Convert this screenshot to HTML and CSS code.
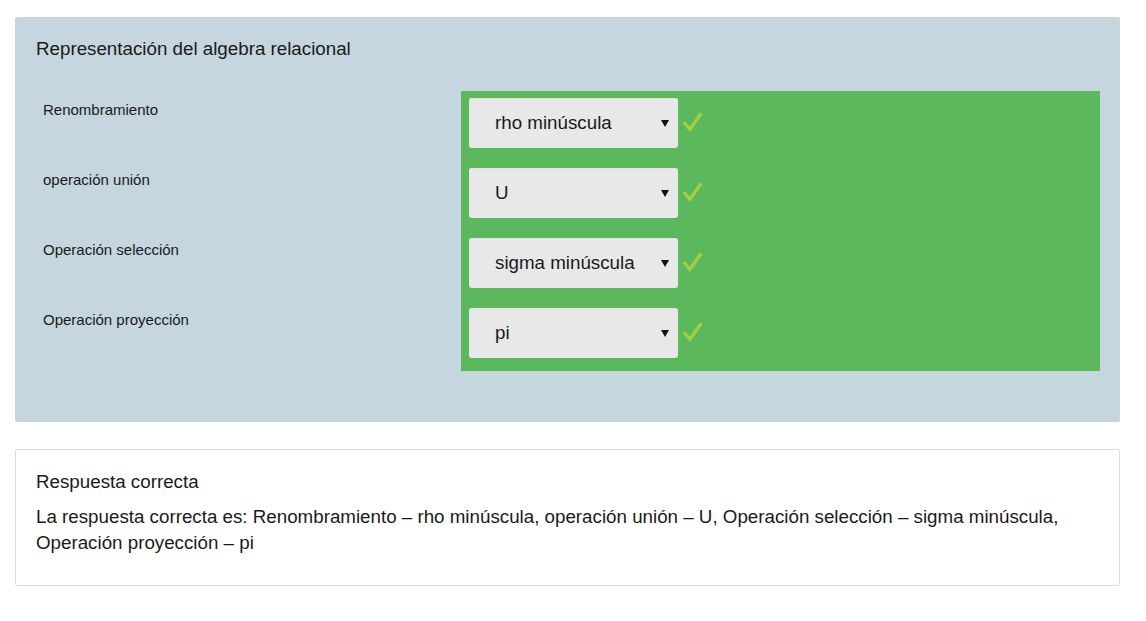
FILE: index.html
```html
<!DOCTYPE html>
<html lang="es">
<head>
<meta charset="utf-8">
<title>Representación del algebra relacional</title>
<link rel="stylesheet" href="styles.css">
</head>
<body>
<div class="page">
  <section class="question">
    <h2 class="q-title">Representación del algebra relacional</h2>
    <div class="match">
      <div class="labels">
        <div class="label-row">Renombramiento</div>
        <div class="label-row">operación unión</div>
        <div class="label-row">Operación selección</div>
        <div class="label-row">Operación proyección</div>
      </div>
      <div class="answers">
        <div class="answer-row">
          <div class="select"><span class="sel-text">rho minúscula</span><svg class="arrow" width="8" height="7" viewBox="0 0 8 7"><path d="M0 0H8L4 7Z" fill="#111"/></svg></div>
          <svg class="check" width="21" height="21" viewBox="0 0 24 24"><path d="M2 12.5 L9 21 L22 2.5" fill="none" stroke="#a3cf3e" stroke-width="3.8" stroke-linejoin="miter"/></svg>
        </div>
        <div class="answer-row">
          <div class="select"><span class="sel-text">U</span><svg class="arrow" width="8" height="7" viewBox="0 0 8 7"><path d="M0 0H8L4 7Z" fill="#111"/></svg></div>
          <svg class="check" width="21" height="21" viewBox="0 0 24 24"><path d="M2 12.5 L9 21 L22 2.5" fill="none" stroke="#a3cf3e" stroke-width="3.8" stroke-linejoin="miter"/></svg>
        </div>
        <div class="answer-row">
          <div class="select"><span class="sel-text">sigma minúscula</span><svg class="arrow" width="8" height="7" viewBox="0 0 8 7"><path d="M0 0H8L4 7Z" fill="#111"/></svg></div>
          <svg class="check" width="21" height="21" viewBox="0 0 24 24"><path d="M2 12.5 L9 21 L22 2.5" fill="none" stroke="#a3cf3e" stroke-width="3.8" stroke-linejoin="miter"/></svg>
        </div>
        <div class="answer-row">
          <div class="select"><span class="sel-text">pi</span><svg class="arrow" width="8" height="7" viewBox="0 0 8 7"><path d="M0 0H8L4 7Z" fill="#111"/></svg></div>
          <svg class="check" width="21" height="21" viewBox="0 0 24 24"><path d="M2 12.5 L9 21 L22 2.5" fill="none" stroke="#a3cf3e" stroke-width="3.8" stroke-linejoin="miter"/></svg>
        </div>
      </div>
    </div>
  </section>
  <section class="feedback">
    <h3 class="fb-title">Respuesta correcta</h3>
    <p class="fb-text">La respuesta correcta es: Renombramiento – rho minúscula, operación unión – U, Operación selección – sigma minúscula, Operación proyección – pi</p>
  </section>
</div>
</body>
</html>
```
FILE: styles.css
```css
html, body {
  margin: 0;
  padding: 0;
  background: #ffffff;
}
body {
  font-family: "Liberation Sans", Arial, sans-serif;
  color: #1a1a1a;
}
.page {
  width: 1105px;
  padding: 17px 0 0 15px;
}
.question {
  background: #c5d6de;
  border-radius: 2px;
  padding: 19px 20px 51px 21px;
}
.q-title {
  margin: 0;
  font-size: 18.75px;
  font-weight: normal;
  line-height: 26px;
  color: #1a1a1a;
}
.match {
  display: flex;
  margin-top: 29px;
}
.labels {
  width: 425px;
  flex: none;
}
.label-row {
  height: 70px;
  box-sizing: border-box;
  padding: 9px 0 0 7px;
  font-size: 15px;
  line-height: 20px;
  color: #1a1a1a;
}
.answers {
  flex: 1;
  background: #5cb85c;
  padding: 0 8px;
}
.answer-row {
  height: 70px;
  box-sizing: border-box;
  padding-top: 7px;
  display: flex;
  align-items: flex-start;
}
.select {
  width: 209px;
  height: 50px;
  box-sizing: border-box;
  background: #e8e8e8;
  border-radius: 3px;
  box-shadow: inset 0 1px 0 #e2e2e2;
  display: flex;
  align-items: center;
  justify-content: space-between;
  padding: 0 9px 0 26px;
  font-size: 18.75px;
  color: #1a1a1a;
}
.arrow {
  display: block;
  margin-top: 1px;
}
.check {
  display: block;
  margin: 13px 0 0 4px;
}
.feedback {
  margin-top: 27px;
  border: 1px solid #dcdcdc;
  border-radius: 2px;
  padding: 19px 20px 29px 20px;
}
.fb-title {
  margin: 0;
  font-size: 18.75px;
  font-weight: normal;
  line-height: 26px;
  color: #1a1a1a;
}
.fb-text {
  margin: 9px 0 0 0;
  font-size: 18.75px;
  line-height: 26px;
  color: #1a1a1a;
}
```
